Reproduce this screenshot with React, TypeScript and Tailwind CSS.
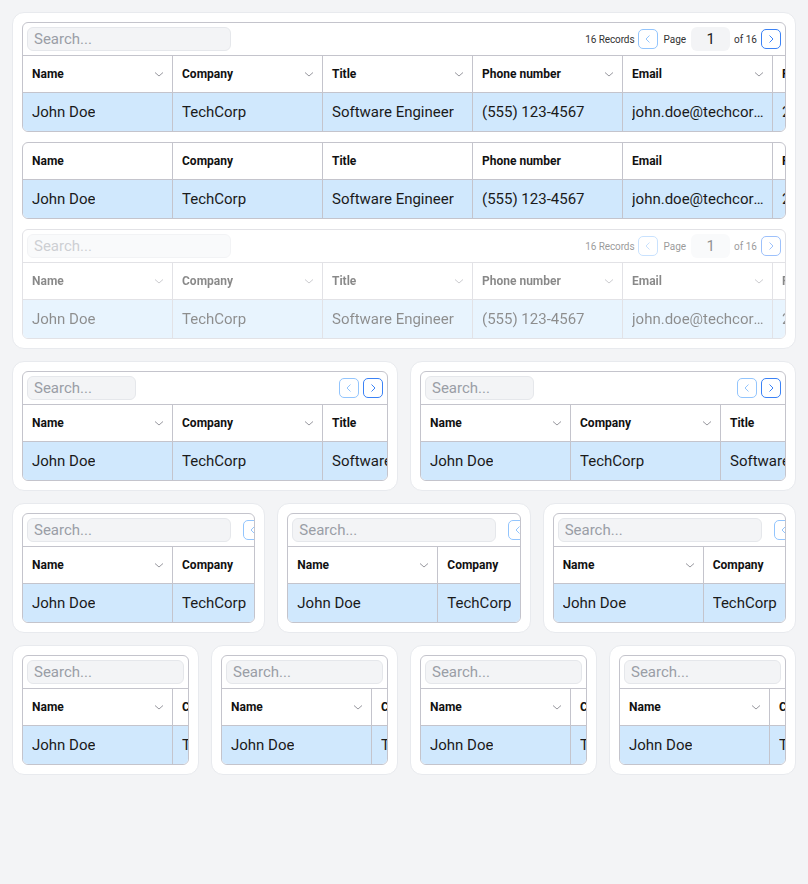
import React from 'react';

type ToolbarKind = 'full' | 'nav' | 'search' | 'none';

interface DataTableProps {
  toolbar: ToolbarKind;
  searchWidth?: string;
  sortable?: boolean;
  disabled?: boolean;
}

const columns = [
  { label: 'Name', value: 'John Doe' },
  { label: 'Company', value: 'TechCorp' },
  { label: 'Title', value: 'Software Engineer' },
  { label: 'Phone number', value: '(555) 123-4567' },
  { label: 'Email', value: 'john.doe@techcorp.com' },
  { label: 'Registered', value: '2023-01-15' },
];

const SortChevron = () => (
  <svg width="10" height="10" viewBox="0 0 10 10" className="shrink-0">
    <path d="M1 3.5 L5 7 L9 3.5" fill="none" stroke="#8b8b93" strokeWidth="0.9" />
  </svg>
);

const PageButton = ({ dir, active }: { dir: 'prev' | 'next'; active: boolean }) => (
  <button
    className={
      'w-5 h-5 shrink-0 flex items-center justify-center rounded-[5px] border bg-white ' +
      (active ? 'border-[#3b82f6]' : 'border-[#93c5fd]')
    }
  >
    <svg width="10" height="10" viewBox="0 0 10 10">
      <path
        d={dir === 'prev' ? 'M6.5 1.5 L3 5 L6.5 8.5' : 'M3.5 1.5 L7 5 L3.5 8.5'}
        fill="none"
        stroke={active ? '#3b82f6' : '#93c5fd'}
        strokeWidth="1"
      />
    </svg>
  </button>
);

const SearchBox = ({ width }: { width: string }) => (
  <input
    placeholder="Search..."
    className={
      'h-6 min-w-0 rounded-md border border-[#e5e7eb] bg-[#f3f4f6] px-[6px] text-[15px] text-gray-800 placeholder:text-[#9a9ea6] outline-none ' +
      width
    }
  />
);

const Toolbar = ({ kind, searchWidth }: { kind: ToolbarKind; searchWidth: string }) => {
  if (kind === 'none') return null;
  return (
    <div className="flex items-center justify-between gap-3 p-1 border-b border-[#c4c4cc]">
      <SearchBox width={kind === 'search' ? 'flex-1' : searchWidth + ' shrink-0'} />
      {kind === 'full' && (
        <div className="flex items-center gap-1 shrink-0 text-[10px] text-[#333]">
          <span className="tracking-[-0.1px]">16 Records</span>
          <PageButton dir="prev" active={false} />
          <span className="ml-[1px]">Page</span>
          <div className="w-[39px] h-6 ml-[1px] rounded-md bg-[#f3f4f6] flex items-center justify-center text-[15px] text-[#222]">
            1
          </div>
          <span>of 16</span>
          <PageButton dir="next" active={true} />
        </div>
      )}
      {kind === 'nav' && (
        <div className="flex items-center gap-1 shrink-0">
          <PageButton dir="prev" active={false} />
          <PageButton dir="next" active={true} />
        </div>
      )}
    </div>
  );
};

const DataTable = ({ toolbar, searchWidth = 'w-[204px]', sortable = true, disabled = false }: DataTableProps) => (
  <div
    className={
      'border border-[#c4c4cc] rounded-md overflow-hidden bg-white ' + (disabled ? 'opacity-50' : '')
    }
  >
    <Toolbar kind={toolbar} searchWidth={searchWidth} />
    <div className="flex border-b border-[#c4c4cc] h-[37px]">
      {columns.map((c) => (
        <div
          key={c.label}
          className="w-[150px] shrink-0 flex items-center justify-between pl-[9px] pr-2 border-r border-[#c4c4cc] text-[12px] font-bold text-[#111]"
        >
          <span className="whitespace-nowrap">{c.label}</span>
          {sortable && <SortChevron />}
        </div>
      ))}
    </div>
    <div className="flex h-[38px] bg-[#d0e8fd]">
      {columns.map((c) => (
        <div
          key={c.label}
          className="w-[150px] shrink-0 flex items-center pl-[9px] pr-[5px] border-r border-[#c4c4cc] text-[15px] text-[#1a1a1a]"
        >
          <span className="truncate">{c.value}</span>
        </div>
      ))}
    </div>
  </div>
);

const Card = ({ children }: { children: React.ReactNode }) => (
  <div className="bg-white rounded-xl border border-[#e8eaee] p-[9px] flex flex-col gap-[10px] min-w-0">
    {children}
  </div>
);

export default function App() {
  return (
    <div className="min-h-[884px] bg-[#f3f4f6] p-3 flex flex-col gap-3 font-['Roboto',sans-serif]">
      <Card>
        <DataTable toolbar="full" />
        <DataTable toolbar="none" sortable={false} />
        <DataTable toolbar="full" disabled />
      </Card>
      <div className="grid grid-cols-2 gap-3">
        <Card>
          <DataTable toolbar="nav" searchWidth="w-[109px]" />
        </Card>
        <Card>
          <DataTable toolbar="nav" searchWidth="w-[109px]" />
        </Card>
      </div>
      <div className="grid grid-cols-3 gap-3">
        <Card>
          <DataTable toolbar="nav" />
        </Card>
        <Card>
          <DataTable toolbar="nav" />
        </Card>
        <Card>
          <DataTable toolbar="nav" />
        </Card>
      </div>
      <div className="grid grid-cols-4 gap-3">
        <Card>
          <DataTable toolbar="search" />
        </Card>
        <Card>
          <DataTable toolbar="search" />
        </Card>
        <Card>
          <DataTable toolbar="search" />
        </Card>
        <Card>
          <DataTable toolbar="search" />
        </Card>
      </div>
    </div>
  );
}
